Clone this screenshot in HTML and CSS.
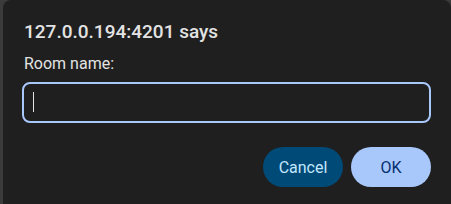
FILE: index.html
```html
<!DOCTYPE html>
<html>
<head>
<meta charset="utf-8">
<link rel="stylesheet" href="styles.css">
</head>
<body>
<div class="page">
  <div class="dialog">
    <div class="title">127.0.0.194:4201 says</div>
    <div class="message">Room name:</div>
    <div class="field"><span class="caret"></span></div>
    <div class="actions">
      <button class="btn cancel">Cancel</button>
      <button class="btn ok">OK</button>
    </div>
  </div>
</div>
</body>
</html>
```

FILE: styles.css
```css
html, body {
  margin: 0;
  padding: 0;
  width: 451px;
  height: 204px;
  overflow: hidden;
  background: #3b3b3b;
}
.page {
  height: 204px;
  padding-left: 3px;
}
.dialog {
  height: 100%;
  background: #1f1f1f;
  border-radius: 8px 8px 0 0;
  padding: 20px 20px 0 19px;
  font-family: Roboto, "Noto Sans", sans-serif;
  color: #e3e3e3;
  box-sizing: border-box;
  overflow: hidden;
}
.title {
  font-size: 19px;
  font-weight: 500;
  line-height: 24px;
  padding-left: 2px;
}
.message {
  font-size: 16px;
  line-height: 20px;
  margin-top: 10px;
  padding-left: 2px;
}
.field {
  margin-top: 8px;
  height: 41px;
  box-sizing: border-box;
  border: 2px solid #a8c7fa;
  border-radius: 8px;
  padding: 8px 9px;
}
.caret {
  display: block;
  width: 1px;
  height: 20px;
  background: #e3e3e3;
}
.actions {
  display: flex;
  justify-content: flex-end;
  gap: 8px;
  margin-top: 24px;
}
.btn {
  width: 80px;
  height: 40px;
  border: none;
  border-radius: 20px;
  font-family: Roboto, "Noto Sans", sans-serif;
  font-size: 16px;
  padding: 0;
}
.cancel {
  background: #004a77;
  color: #c2e7ff;
}
.ok {
  background: #a8c7fa;
  color: #062e6f;
}
```
